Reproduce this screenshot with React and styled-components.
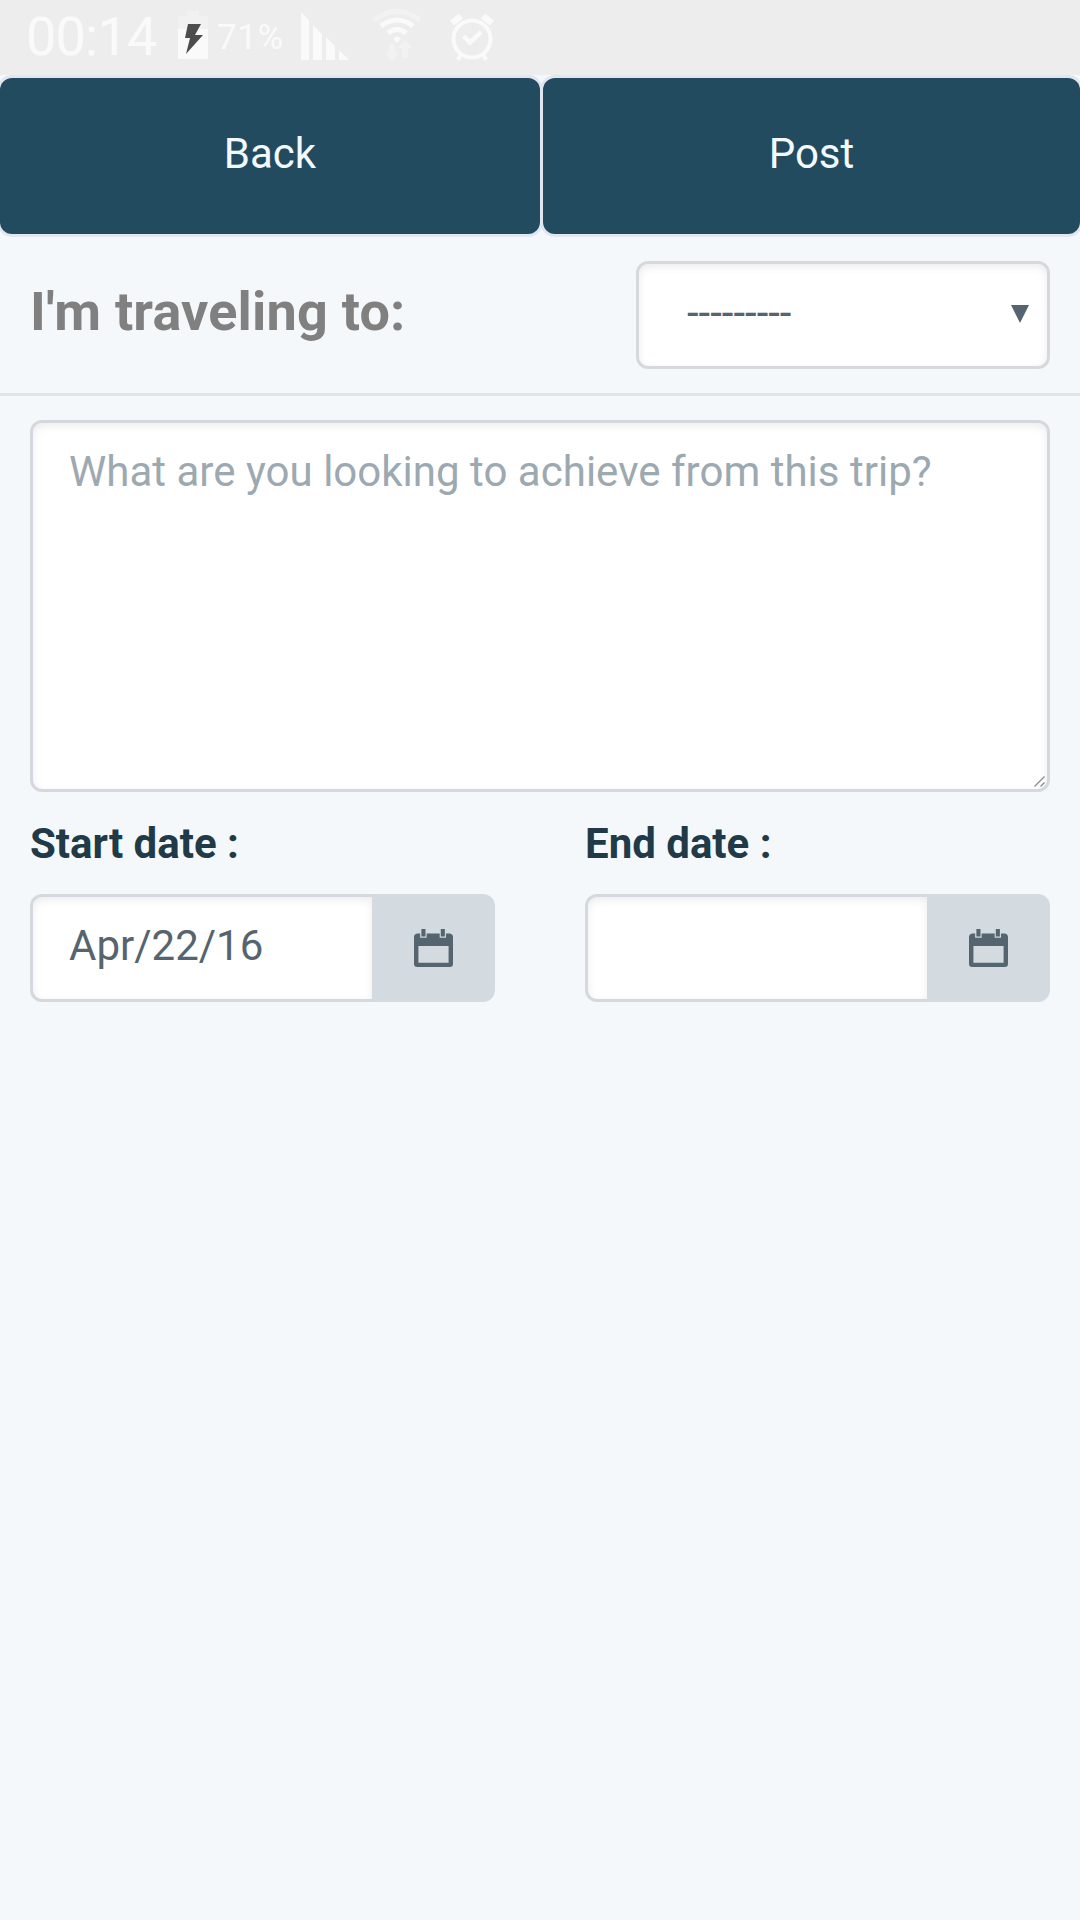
import React, { useState } from "react";
import styled, { createGlobalStyle } from "styled-components";

const GlobalStyle = createGlobalStyle`
  * {
    box-sizing: border-box;
  }
  body {
    margin: 0;
    background: #f4f8fb;
    font-family: Roboto, sans-serif;
  }
`;

const Page = styled.div`
  width: 1080px;
  height: 1920px;
  display: flex;
  flex-direction: column;
  background: #f4f8fb;
  overflow: hidden;
`;

const StatusBar = styled.div`
  height: 75px;
  flex: none;
  display: flex;
  align-items: flex-start;
  padding-left: 26px;
  background: #ededed;
  color: #fafafa;
`;

const Clock = styled.span`
  width: 150px;
  margin-top: 5px;
  font-size: 54px;
  font-weight: 400;
  line-height: 64px;
  letter-spacing: -0.8px;
  white-space: nowrap;
`;

const Percent = styled.span`
  width: 68px;
  margin: 17px 15px 0 7px;
  font-size: 35px;
  font-weight: 400;
  line-height: 42px;
  letter-spacing: 0.6px;
  white-space: nowrap;
`;

const StatusIcon = styled.svg`
  display: block;
  flex: none;
  width: ${({ $width }) => $width}px;
  height: 75px;
  margin-right: ${({ $gap }) => $gap || 0}px;
`;

const Actions = styled.div`
  display: grid;
  grid-template-columns: 540px 537px;
  column-gap: 3px;
  height: 162px;
  flex: none;
  padding: 3px 0;
`;

const ActionButton = styled.button`
  border: none;
  border-radius: 12px;
  padding: 0 0 6px;
  background: #234b60;
  box-shadow: 0 0 0 3px #e0e7ef;
  color: #f3faff;
  font-family: inherit;
  font-size: 42px;
  cursor: pointer;
`;

const Destination = styled.div`
  display: flex;
  justify-content: space-between;
  align-items: flex-start;
  height: 159px;
  flex: none;
  padding: 24px 30px 0;
  border-bottom: 3px solid #e1e3e4;
`;

const Title = styled.h1`
  margin: 18px 0 0;
  color: #808080;
  font-size: 54px;
  font-weight: 700;
  line-height: 66px;
  letter-spacing: 0.18px;
`;

const SelectBox = styled.div`
  display: flex;
  justify-content: space-between;
  align-items: center;
  width: 414px;
  height: 108px;
  padding: 0 18px 0 48px;
  border: 3px solid #d5d9dd;
  border-radius: 12px;
  background: #fff;
  box-shadow: inset 0 3px 9px rgba(0, 0, 0, 0.08);
  color: #54656f;
  font-size: 42px;
`;

const Selected = styled.span`
  padding-bottom: 5px;
`;

const Arrow = styled.svg`
  display: block;
  width: 18px;
  height: 18px;
  margin-bottom: 2px;
`;

const Form = styled.div`
  display: flex;
  flex-direction: column;
  padding: 24px 30px 0;
`;

const MessageWrap = styled.div`
  position: relative;
  height: 372px;
`;

const Message = styled.textarea`
  display: block;
  width: 100%;
  height: 100%;
  padding: 22px 36px;
  border: 3px solid #d3d9de;
  border-radius: 12px;
  outline: none;
  resize: none;
  background: #fff;
  box-shadow: inset 0 3px 9px rgba(0, 0, 0, 0.08);
  color: #54656f;
  font-family: inherit;
  font-size: 42px;
  line-height: 54px;
  letter-spacing: 0.02px;
  &::placeholder {
    color: #9ca9b1;
    opacity: 1;
  }
`;

const Grip = styled.svg`
  position: absolute;
  right: 4px;
  bottom: 4px;
  width: 12px;
  height: 12px;
  pointer-events: none;
`;

const Dates = styled.div`
  display: grid;
  grid-template-columns: 465px 465px;
  justify-content: space-between;
`;

const Label = styled.label`
  display: block;
  padding-top: 25px;
  height: 102px;
  color: #203a48;
  font-size: 42px;
  font-weight: 700;
  line-height: 54px;
`;

const InputGroup = styled.div`
  display: flex;
  height: 108px;
`;

const DateInput = styled.input`
  width: 342px;
  height: 108px;
  padding: 0 0 5px 36px;
  border: 3px solid #d3d9de;
  border-right: none;
  border-radius: 12px 0 0 12px;
  outline: none;
  background: #fff;
  box-shadow: inset 0 3px 9px rgba(0, 0, 0, 0.08);
  color: #54656f;
  font-family: inherit;
  font-size: 42px;
`;

const Addon = styled.button`
  display: flex;
  justify-content: center;
  align-items: center;
  width: 123px;
  padding: 0;
  border: none;
  border-radius: 0 12px 12px 0;
  background: #d3dae0;
  color: #54656f;
`;

const CalendarSvg = styled.svg`
  display: block;
  width: 39px;
  height: 38px;
`;

const CalendarIcon = () => (
  <CalendarSvg viewBox="0 0 38 38" preserveAspectRatio="none" fill="currentColor">
    <path
      d="M3 4.5H6V8.7H12.3V4.5H25V8.7H31.2V4.5H35Q38 5 38 8V35Q38 38 35 38H3Q0 38 0 35V8Q0 5 3 4.5ZM4.3 17V33.7H33.7V17Z"
      fillRule="evenodd"
    />
    <path d="M7.2 0H11.2V7.5H7.2ZM26.1 0H30.1V7.5H26.1Z" />
  </CalendarSvg>
);

const DateField = ({ id, label, initialValue = "" }) => {
  const [value, setValue] = useState(initialValue);

  return (
    <div>
      <Label htmlFor={id}>{label}</Label>
      <InputGroup>
        <DateInput id={id} value={value} onChange={(e) => setValue(e.target.value)} />
        <Addon type="button">
          <CalendarIcon />
        </Addon>
      </InputGroup>
    </div>
  );
};

const App = () => {
  return (
    <>
      <GlobalStyle />
      <Page>
        <StatusBar>
          <Clock>00:14</Clock>
          <StatusIcon $width={34} viewBox="176 0 34 75">
            <path d="M178 29H208V59H178Z" fill="#fafafa" />
            <path d="M187 11H199V16H208V29H178V16H187Z" fill="#f1f1f1" />
            <path d="M188 24H201L195 35H203L186 54L190 38H185Z" fill="#4d4d4d" />
          </StatusIcon>
          <Percent>71%</Percent>
          {/* signal */}
          <StatusIcon $width={50} $gap={20} viewBox="300 0 50 75" fill="#fafafa">
            <path d="M301 12L309 20V60H301ZM313 25L322 34V60H313ZM326 37L335 46V60H326ZM339 50L349 60H339Z" />
          </StatusIcon>
          {/* wifi */}
          <StatusIcon $width={54} $gap={25} viewBox="370 0 54 75" fill="none">
            <path d="M374 20Q397 3 420 20" stroke="#f2f2f2" strokeWidth="5" />
            <path d="M381 26Q397 14 413 26M388 33Q397 26 406 33" stroke="#fafafa" strokeWidth="5" />
            <path d="M393 39Q397 34 401 39L397 43Z" fill="#fafafa" />
            <path d="M389 44H395V53H399L392 61L385 53H389ZM402 58V48H398L405 40L412 48H408V58Z" fill="#f2f2f2" />
          </StatusIcon>
          {/* alarm */}
          <StatusIcon $width={46} viewBox="449 0 46 75" fill="none" stroke="#fafafa">
            <circle cx="472" cy="39" r="18.5" strokeWidth="4" />
            <path d="M463.5 36L470 42.5L481 32" strokeWidth="4.5" />
            <path d="M452 23L461 16M483 16L492 23" strokeWidth="6.5" />
            <path d="M461 54L458 60M483 54L486 60" strokeWidth="4" />
          </StatusIcon>
        </StatusBar>

        <Actions>
          <ActionButton type="button">Back</ActionButton>
          <ActionButton type="button">Post</ActionButton>
        </Actions>

        <Destination>
          <Title>I'm traveling to:</Title>
          <SelectBox>
            <Selected>---------</Selected>
            <Arrow viewBox="0 0 18 18">
              <path d="M0 0H18L9 18Z" fill="#54656f" />
            </Arrow>
          </SelectBox>
        </Destination>

        <Form>
          <MessageWrap>
            <Message placeholder="What are you looking to achieve from this trip?" />
            <Grip viewBox="0 0 12 12">
              <path d="M0.5 10.5L10.5 0.5M6.5 10.5L10.5 6.5" stroke="#8b8b8b" strokeWidth="1.3" />
            </Grip>
          </MessageWrap>
          <Dates>
            <DateField id="start-date" label="Start date :" initialValue="Apr/22/16" />
            <DateField id="end-date" label="End date :" />
          </Dates>
        </Form>
      </Page>
    </>
  );
};

export default App;
